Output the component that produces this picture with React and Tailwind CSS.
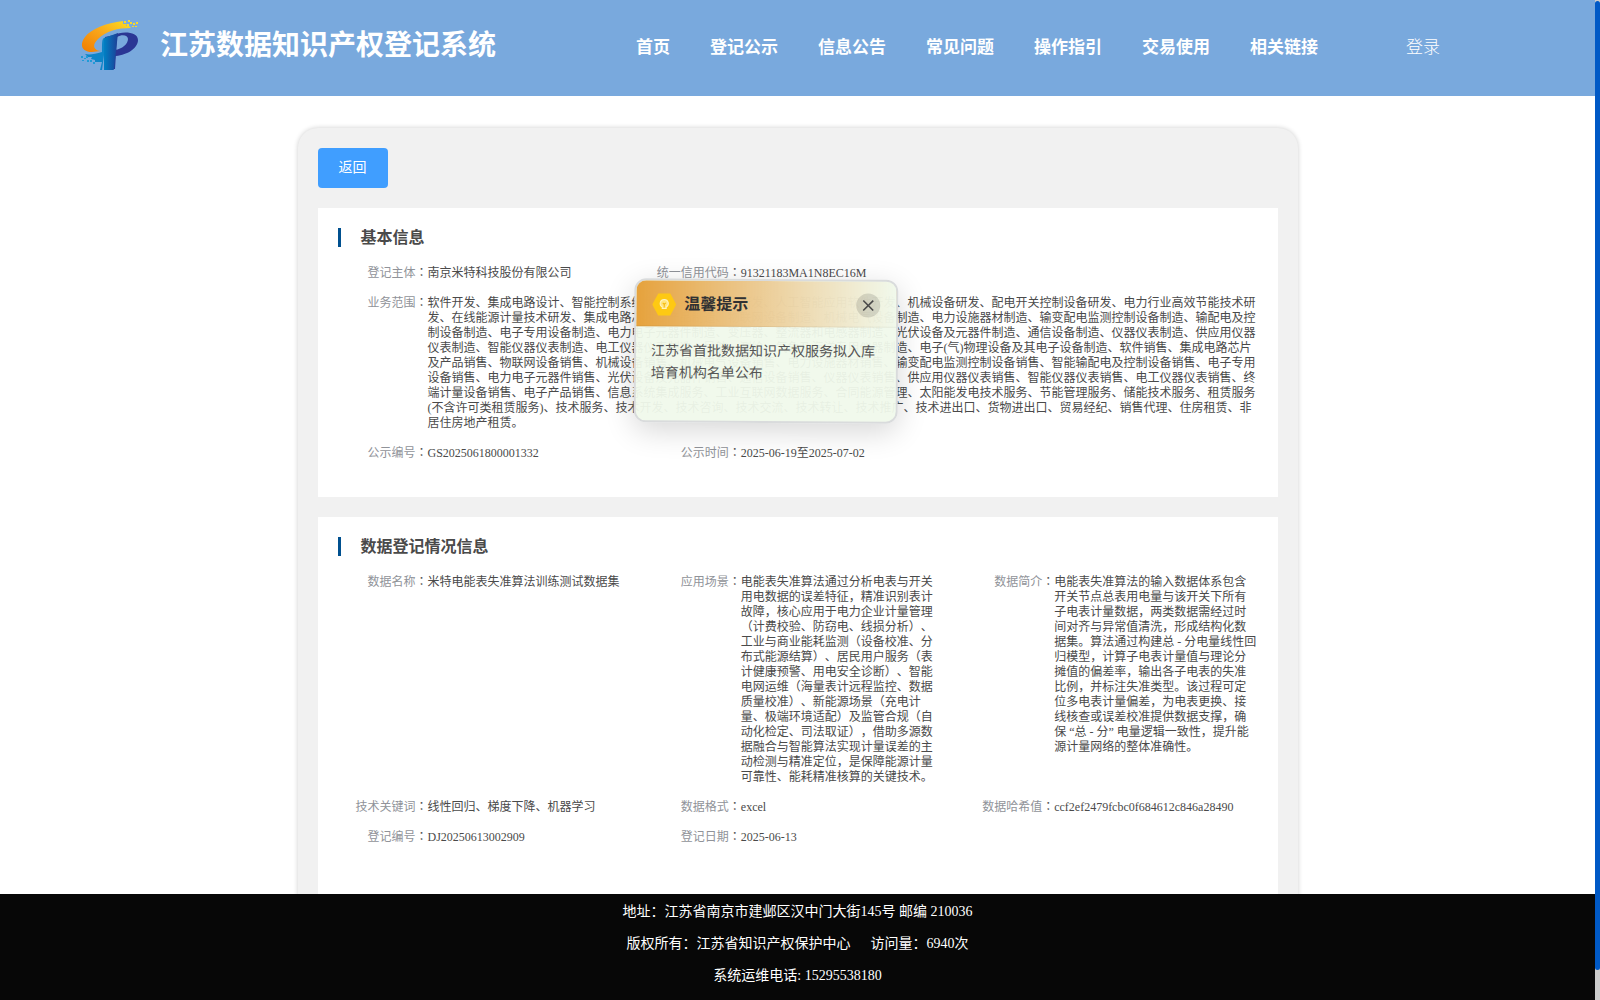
import React, { useState } from 'react';

const navItems = ['首页', '登记公示', '信息公告', '常见问题', '操作指引', '交易使用', '相关链接'];

const scope =
    '软件开发、集成电路设计、智能控制系统集成、物联网技术研发、人工智能应用软件开发、机械设备研发、配电开关控制设备研发、电力行业高效节能技术研发、在线能源计量技术研发、集成电路芯片及产品制造、物联网设备制造、机械电气设备制造、电力设施器材制造、输变配电监测控制设备制造、输配电及控制设备制造、电子专用设备制造、电力电子元器件制造、变压器、整流器和电感器制造、光伏设备及元器件制造、通信设备制造、仪器仪表制造、供应用仪器仪表制造、智能仪器仪表制造、电工仪器仪表制造、导航、测绘、气象及海洋专用仪器制造、电子(气)物理设备及其电子设备制造、软件销售、集成电路芯片及产品销售、物联网设备销售、机械设备销售、机械电气设备销售、电力设施器材销售、输变配电监测控制设备销售、智能输配电及控制设备销售、电子专用设备销售、电力电子元器件销售、光伏设备及元器件销售、通信设备销售、仪器仪表销售、供应用仪器仪表销售、智能仪器仪表销售、电工仪器仪表销售、终端计量设备销售、电子产品销售、信息系统集成服务、工业互联网数据服务、合同能源管理、太阳能发电技术服务、节能管理服务、储能技术服务、租赁服务(不含许可类租赁服务)、技术服务、技术开发、技术咨询、技术交流、技术转让、技术推广、技术进出口、货物进出口、贸易经纪、销售代理、住房租赁、非居住房地产租赁。';

const basicInfo = [
    { label: '登记主体', value: '南京米特科技股份有限公司' },
    { label: '统一信用代码', value: '91321183MA1N8EC16M', wide: true },
    { label: '业务范围', value: scope, full: true },
    { label: '公示编号', value: 'GS2025061800001332' },
    { label: '公示时间', value: '2025-06-19至2025-07-02', wide: true },
];

const dataInfo = [
    { label: '数据名称', value: '米特电能表失准算法训练测试数据集' },
    {
        label: '应用场景',
        value: '电能表失准算法通过分析电表与开关用电数据的误差特征，精准识别表计故障，核心应用于电力企业计量管理（计费校验、防窃电、线损分析）、工业与商业能耗监测（设备校准、分布式能源结算）、居民用户服务（表计健康预警、用电安全诊断）、智能电网运维（海量表计远程监控、数据质量校准）、新能源场景（充电计量、极端环境适配）及监管合规（自动化检定、司法取证），借助多源数据融合与智能算法实现计量误差的主动检测与精准定位，是保障能源计量可靠性、能耗精准核算的关键技术。',
    },
    {
        label: '数据简介',
        value: '电能表失准算法的输入数据体系包含开关节点总表用电量与该开关下所有子电表计量数据，两类数据需经过时间对齐与异常值清洗，形成结构化数据集。算法通过构建总 - 分电量线性回归模型，计算子电表计量值与理论分摊值的偏差率，输出各子电表的失准比例，并标注失准类型。该过程可定位多电表计量偏差，为电表更换、接线核查或误差校准提供数据支撑，确保 “总 - 分” 电量逻辑一致性，提升能源计量网络的整体准确性。',
    },
    { label: '技术关键词', value: '线性回归、梯度下降、机器学习' },
    { label: '数据格式', value: 'excel' },
    { label: '数据哈希值', value: 'ccf2ef2479fcbc0f684612c846a28490' },
    { label: '登记编号', value: 'DJ20250613002909' },
    { label: '登记日期', value: '2025-06-13' },
];

const Logo = () => (
    <svg viewBox="0 0 60 52" className="mb-1 h-[52px] w-[60px] shrink-0" aria-hidden="true">
        <defs>
            <linearGradient id="swoosh" x1="0" y1="1" x2="1" y2="0">
                <stop offset="0" stopColor="#f07c00" />
                <stop offset="0.5" stopColor="#f9a51a" />
                <stop offset="1" stopColor="#fde021" />
            </linearGradient>
            <linearGradient id="stem" x1="0" y1="0" x2="1" y2="0">
                <stop offset="0" stopColor="#0080c4" />
                <stop offset="1" stopColor="#1d3f96" />
            </linearGradient>
        </defs>
        <path d="M43 1C26 3 11 9 5 17C-1 25 2 32 12 32L21 31C13 30 12 25 18 19C26 11 38 8 51 8L49 6L46 6L47 4L43 4Z" fill="url(#swoosh)" />
        <path d="M44 1h2v2h-2zM48 0h2v2h-2zM50 2h2v2h-2zM53 3h2v2h-2zM47 4h2v2h-2zM56 2h2v2h-2zM52 6h2v1h-2zM55 6h2v1h-2z" fill="#f8d92c" />
        <path d="M34 15C41 11 58 11 58 20C58 29 45 36 34 36L35 30C42 29 48 24 48 19C48 15 42 14 37 17L35 49L24 49L25 17Z" fill="#2b3694" />
        <path d="M24 18L38 13L34 49C34 50 33 50 32 50L24 50Z" fill="url(#stem)" />
        <path d="M24 18C22 19 22 22 22 32C15 34 10 35 5 34L8 37L12 37L11 39L15 40L15 42L22 42L20 50L22 50L24 35Z" fill="#0d85c8" />
        <path d="M1 36h2v2h-2zM4 38h2v1h-2zM6 36h2v2h-2zM2 40h2v1h-2zM7 40h2v2h-2zM10 40h2v2h-2zM13 42h2v2h-2z" fill="#1f9bd7" />
    </svg>
);

const Field = ({ label, value, wide, full }) => (
    <div className={`flex ${full ? 'col-span-3' : wide ? 'col-span-2' : ''}`}>
        <dt className="w-[90px] shrink-0 text-right text-[#909399]">
            {label}
            <span className="font-['Noto_Sans_CJK_TC',sans-serif] leading-none text-[#555]">：</span>
        </dt>
        <dd className="min-w-0 flex-1 pr-5 text-[#4a4a4a]">{value}</dd>
    </div>
);

const Section = ({ title, fields, className = '' }) => (
    <section className={`bg-white pt-5 pl-5 ${className}`}>
        <h2 className="flex h-[19px] items-center border-l-3 border-[#00508f] pl-5 text-base font-bold text-[#4a4a4a]">
            {title}
        </h2>
        <dl className="mt-[19px] grid grid-cols-3 gap-y-[15px] text-xs leading-[15px]">
            {fields.map((field) => (
                <Field key={field.label} {...field} />
            ))}
        </dl>
    </section>
);

const Notice = ({ onClose }) => (
    <aside className="absolute top-[279px] left-[634px] flex h-[144px] w-[264px] rotate-[0.3deg] flex-col overflow-hidden rounded-xl border-2 border-[#d9dbdc] bg-[#f0f9eb]/95 shadow-[0_8px_30px_rgba(0,0,0,0.16)]">
        <div className="flex h-[46px] items-center border-b border-black/5 bg-linear-to-r from-[#e6a23c] to-[#f0f9eb]/30 px-4 pt-0.5">
            <svg viewBox="0 0 24 24" className="h-6 w-6" aria-hidden="true">
                <path d="M6 1h12l6 11-6 11H6L0 12z" fill="#fec913" />
                <path d="M12 7a4 4 0 0 0-2 7.500V16h4v-1.500A4 4 0 0 0 12 7z" fill="#ffe680" stroke="#fff3c4" />
                <path d="M10.500 10.500l1.500 1.500 1.500-1.500M12 12v3" stroke="#f5b80c" fill="none" />
            </svg>
            <h3 className="ml-2 text-base font-bold text-[#303133]">温馨提示</h3>
            <button
                type="button"
                aria-label="关闭"
                onClick={onClose}
                className="ml-auto flex h-6 w-6 items-center justify-center rounded-full bg-black/12"
            >
                <svg viewBox="0 0 12 12" className="h-3 w-3" aria-hidden="true">
                    <path d="M1 1l10 10M11 1L1 11" stroke="#4a4a4a" strokeWidth="1.6" />
                </svg>
            </button>
        </div>
        <p className="px-[15px] py-[14px] text-sm leading-[22px] text-[#555]">
            江苏省首批数据知识产权服务拟入库培育机构名单公布
        </p>
    </aside>
);

const App = () => {
    const [noticeOpen, setNoticeOpen] = useState(true);

    return (
        <div className="relative flex h-screen overflow-hidden bg-white font-['Liberation_Serif','Noto_Sans_CJK_SC',serif] [text-spacing-trim:space-all]">
            <div className="flex min-w-0 flex-1 flex-col">
                <header className="flex h-24 shrink-0 items-center bg-[#79a9dd] pl-20 whitespace-nowrap text-white">
                    <Logo />
                    <h1 className="ml-5 pb-1 text-[28px] leading-9 font-bold">江苏数据知识产权登记系统</h1>
                    <nav className="ml-[140px] flex gap-10 text-[17px] font-bold">
                        {navItems.map((item) => (
                            <a key={item} href="#">{item}</a>
                        ))}
                    </nav>
                    <a href="#" className="ml-[88px] text-[17px] font-light">登录</a>
                </header>

                <main className="min-h-0 flex-1 overflow-hidden pt-8">
                    <div className="mx-auto max-w-[1000px] rounded-[20px] bg-[#f1f1f1] p-5 shadow-[0_0_5px_rgba(0,0,0,0.2)]">
                        <button type="button" className="h-10 w-[70px] rounded bg-[#409eff] text-sm text-white">
                            返回
                        </button>
                        <Section title="基本信息" fields={basicInfo} className="mt-5 pb-9" />
                        <Section title="数据登记情况信息" fields={dataInfo} className="mt-5 pb-20" />
                    </div>
                </main>

                <footer className="shrink-0 bg-[#070707] pt-0.5 pb-2 text-center text-sm leading-8 text-white">
                    <p>地址：江苏省南京市建邺区汉中门大街145号 邮编 210036</p>
                    <p>
                        版权所有：江苏省知识产权保护中心<span className="ml-5">访问量：6940次</span>
                    </p>
                    <p>系统运维电话: 15295538180</p>
                </footer>
            </div>

            {/* scroll track */}
            <div className="w-[5px] shrink-0 bg-[#cbcbcb] pt-px">
                <div className="h-[97%] rounded-full bg-[#0059c6]" />
            </div>

            {noticeOpen && <Notice onClose={() => setNoticeOpen(false)} />}
        </div>
    );
};

export default App;
